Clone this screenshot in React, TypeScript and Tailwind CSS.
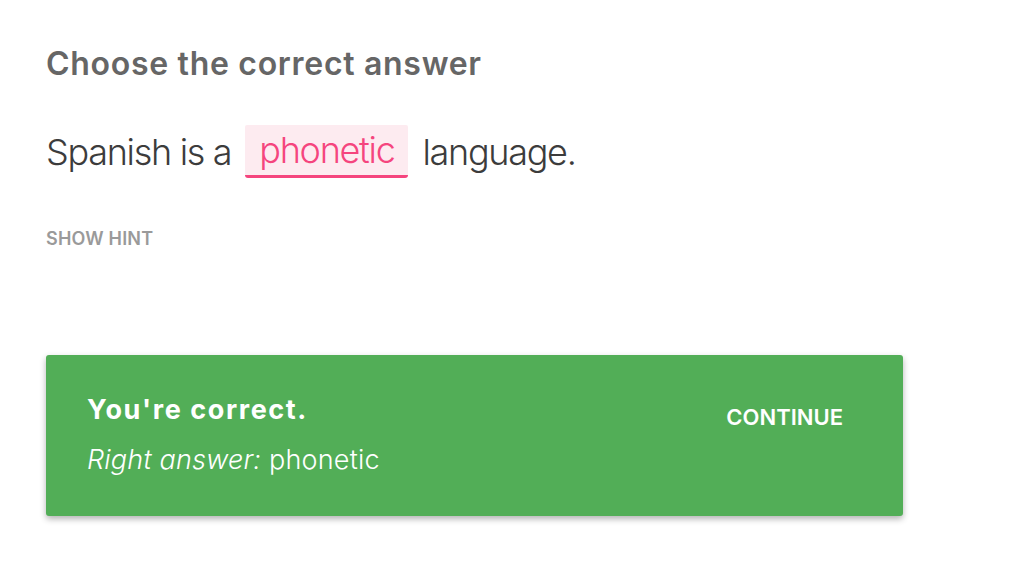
export default function App() {
  return (
    <div className="w-[1024px] h-[587px] bg-white overflow-hidden" style={{ fontFamily: 'Inter, Lato, sans-serif' }}>
      <div className="pl-[46px] pt-[44px] w-[903px] box-content">
        <h1 className="text-[32px] leading-[40px] font-semibold text-[#666666] tracking-[0.7px]">Choose the correct answer</h1>
        <div className="mt-[41px] flex items-center text-[36px] font-light text-[#3c3c3c] leading-[44px] tracking-[-1.3px]">
          <span>Spanish is a</span>
          <span className="mx-[14px] px-[14px] h-[53px] flex items-center bg-[#fdebf0] border-b-[3px] border-[#f5457e] rounded-t-[2px] rounded-b-[3px] text-[#f5457e]">phonetic</span>
          <span>language.</span>
        </div>
        <div className="mt-[49px] text-[18px] leading-[24px] font-semibold text-[#9a9a9a] tracking-[0.2px]">SHOW HINT</div>
        <div className="mt-[104px] h-[161px] w-[857px] rounded-[3px] bg-[#52ae57] shadow-[0_3px_6px_rgba(0,0,0,0.3)] flex justify-between pl-[41px] pr-[60px] pt-[37px]">
          <div className="text-white">
            <div className="text-[27px] font-bold leading-[36px] tracking-[1.6px]">You're correct.</div>
            <div className="mt-[15px] text-[27px] font-light leading-[34px] tracking-[0.2px]"><i>Right answer:</i> phonetic</div>
          </div>
          <div className="text-white text-[22px] leading-[28px] font-semibold pt-[11px]">CONTINUE</div>
        </div>
      </div>
    </div>
  );
}
